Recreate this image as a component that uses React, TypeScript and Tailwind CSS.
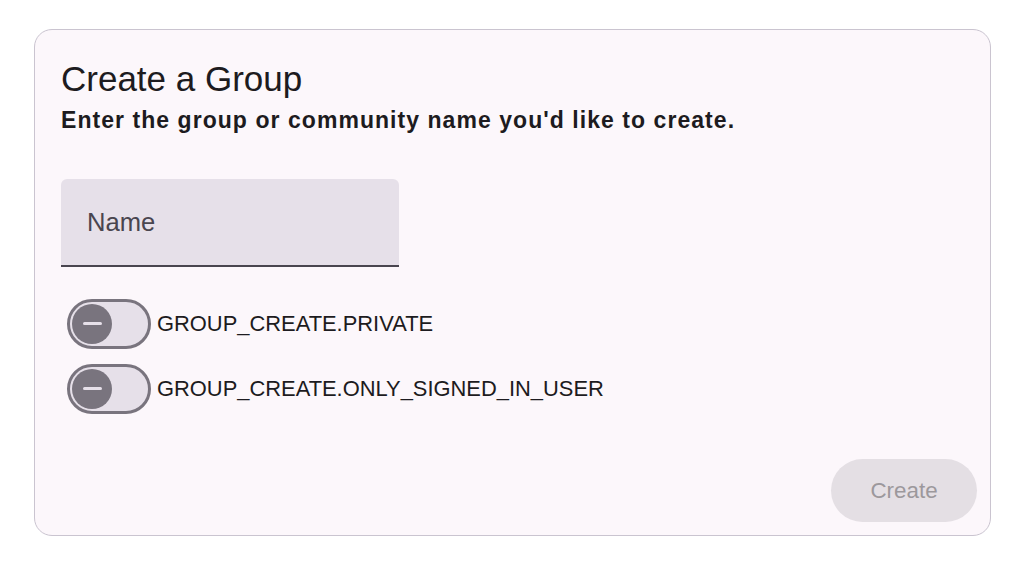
import React from "react";

function Toggle({ label }: { label: string }) {
  return (
    <div className="flex items-center h-[65px]">
      <div className="ml-[6px] w-[84px] h-[50px] rounded-full border-[3px] border-[#79747e] bg-[#e6e0e9] flex items-center pl-[2px] shrink-0">
        <div className="w-[40px] h-[40px] rounded-full bg-[#79747e] flex items-center justify-center">
          <div className="w-[19px] h-[3px] rounded-full bg-[#e6e0e9]" />
        </div>
      </div>
      <span className="ml-[6px] text-[21.9px] leading-none text-[#1d1b20]">{label}</span>
    </div>
  );
}

export default function App() {
  return (
    <div
      className="w-[1024px] h-[567px] bg-white pt-[29px] pl-[34px]"
      style={{ fontFamily: '"Liberation Sans", Arial, sans-serif' }}
    >
      <div className="w-[957px] h-[507px] rounded-[18px] border border-[#cac4d0] bg-[#fcf7fb] flex flex-col">
        <div className="pt-[26px] px-[26px] flex flex-col">
          <h1 className="text-[35px] leading-[45px] text-[#1d1b20] font-normal">Create a Group</h1>
          <p className="mt-[3px] text-[23px] tracking-[1.05px] leading-[32px] font-bold text-[#1d1b20]">
            Enter the group or community name you'd like to create.
          </p>
          <div className="mt-[43px] w-[338px] h-[88px] bg-[#e6e0e9] rounded-t-[6px] border-b-[2px] border-[#49454f] flex items-center pl-[26px]">
            <span className="text-[25.6px] text-[#49454f]">Name</span>
          </div>
          <div className="mt-[24px] flex flex-col">
            <Toggle label="GROUP_CREATE.PRIVATE" />
            <Toggle label="GROUP_CREATE.ONLY_SIGNED_IN_USER" />
          </div>
        </div>
        <div className="mt-auto flex justify-end pr-[13px] pb-[13px]">
          <button className="w-[146px] h-[63px] rounded-full bg-[#e4dfe4] text-[#9c989c] text-[22.4px] font-medium">
            Create
          </button>
        </div>
      </div>
    </div>
  );
}
